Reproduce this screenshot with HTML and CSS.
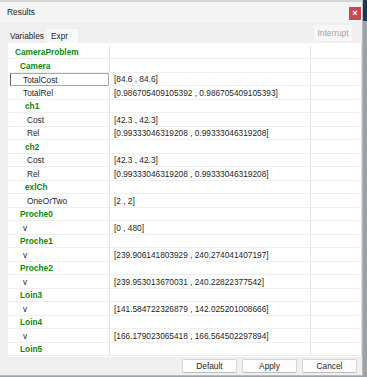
FILE: index.html
```html
<!DOCTYPE html>
<html>
<head>
<meta charset="utf-8">
<link rel="stylesheet" href="styles.css">
</head>
<body>
<div class="window">
  <div class="titlebar">
    <span class="title">Results</span>
    <span class="close">×</span>
  </div>
  <div class="toolrow">
    <div class="tabs">
      <span class="tab">Variables</span>
      <span class="tab active">Expr</span>
    </div>
    <span class="interrupt">Interrupt</span>
  </div>
  <div class="table">
    <div class="row"><div class="c1 grp l0">CameraProblem</div><div class="c2"></div><div class="c3"></div></div>
    <div class="row"><div class="c1 grp l1">Camera</div><div class="c2"></div><div class="c3"></div></div>
    <div class="row"><div class="c1 l2 sel">TotalCost</div><div class="c2">[84.6 , 84.6]</div><div class="c3"></div></div>
    <div class="row"><div class="c1 l2">TotalRel</div><div class="c2">[0.986705409105392 , 0.986705409105393]</div><div class="c3"></div></div>
    <div class="row"><div class="c1 grp l3">ch1</div><div class="c2"></div><div class="c3"></div></div>
    <div class="row"><div class="c1 l4">Cost</div><div class="c2">[42.3 , 42.3]</div><div class="c3"></div></div>
    <div class="row"><div class="c1 l4">Rel</div><div class="c2">[0.99333046319208 , 0.99333046319208]</div><div class="c3"></div></div>
    <div class="row"><div class="c1 grp l3">ch2</div><div class="c2"></div><div class="c3"></div></div>
    <div class="row"><div class="c1 l4">Cost</div><div class="c2">[42.3 , 42.3]</div><div class="c3"></div></div>
    <div class="row"><div class="c1 l4">Rel</div><div class="c2">[0.99333046319208 , 0.99333046319208]</div><div class="c3"></div></div>
    <div class="row"><div class="c1 grp l3">exlCh</div><div class="c2"></div><div class="c3"></div></div>
    <div class="row"><div class="c1 l4">OneOrTwo</div><div class="c2">[2 , 2]</div><div class="c3"></div></div>
    <div class="row"><div class="c1 grp l1">Proche0</div><div class="c2"></div><div class="c3"></div></div>
    <div class="row"><div class="c1 l2">v</div><div class="c2">[0 , 480]</div><div class="c3"></div></div>
    <div class="row"><div class="c1 grp l1">Proche1</div><div class="c2"></div><div class="c3"></div></div>
    <div class="row"><div class="c1 l2">v</div><div class="c2">[239.906141803929 , 240.274041407197]</div><div class="c3"></div></div>
    <div class="row"><div class="c1 grp l1">Proche2</div><div class="c2"></div><div class="c3"></div></div>
    <div class="row"><div class="c1 l2">v</div><div class="c2">[239.953013670031 , 240.22822377542]</div><div class="c3"></div></div>
    <div class="row"><div class="c1 grp l1">Loin3</div><div class="c2"></div><div class="c3"></div></div>
    <div class="row"><div class="c1 l2">v</div><div class="c2">[141.584722326879 , 142.025201008666]</div><div class="c3"></div></div>
    <div class="row"><div class="c1 grp l1">Loin4</div><div class="c2"></div><div class="c3"></div></div>
    <div class="row"><div class="c1 l2">v</div><div class="c2">[166.179023065418 , 166.564502297894]</div><div class="c3"></div></div>
    <div class="row"><div class="c1 grp l1">Loin5</div><div class="c2"></div><div class="c3"></div></div>
  </div>
  <div class="buttons">
    <span class="btn">Default</span>
    <span class="btn">Apply</span>
    <span class="btn">Cancel</span>
  </div>
</div>
</body>
</html>
```
FILE: styles.css
```css
* { box-sizing: border-box; }
html, body { margin: 0; padding: 0; }
body {
  width: 367px;
  height: 377px;
  overflow: hidden;
  background: linear-gradient(#1f3552 0 21px, #9da2a8 21px);
  font-family: "Liberation Sans", Arial, sans-serif;
  font-size: 8.3px;
  color: #1e1e1e;
}
.window {
  width: 363px;
  height: 376px;
  background: #efefef;
  border-top: 2px solid #d4d4d4;
  border-right: 1px solid #b9b9b9;
  border-bottom: 1px solid #b9b9b9;
  display: flex;
  flex-direction: column;
}
.titlebar {
  height: 20px;
  background: #f4f4f4;
  display: flex;
  align-items: center;
  padding-left: 7px;
}
.title { font-size: 8.4px; color: #1a1a1a; }
.close {
  margin-left: auto;
  margin-right: 1px;
  align-self: flex-start;
  margin-top: 5px;
  width: 12px;
  height: 13px;
  background: #c9494c;
  color: #fff;
  font-size: 9px;
  font-weight: bold;
  line-height: 13px;
  text-align: center;
}
.toolrow {
  margin-top: 3px;
  height: 18px;
  display: flex;
  align-items: stretch;
  padding-left: 8px;
  padding-right: 10px;
}
.tabs {
  display: flex;
  align-items: flex-end;
}
.tab {
  height: 14px;
  display: flex;
  align-items: center;
  padding: 0 3px 0 2px;
}
.tab.active {
  background: #f9f9f9;
  padding: 0 10px 0 4px;
}
.interrupt {
  margin-left: auto;
  width: 38px;
  height: 16px;
  background: #f7f7f7;
  color: #a3a3a3;
  display: flex;
  align-items: center;
  justify-content: center;
}
.table {
  margin-left: 8px;
  width: 354px;
  height: 314px;
  background: #fff;
  padding-top: 2.8px;
  border-right: 1px solid #dcdcdc;
}
.row {
  display: grid;
  grid-template-columns: 102px 201px 1fr;
  height: 13.5px;
}
.row > div {
  border-bottom: 1px solid #efefef;
  display: flex;
  align-items: center;
  white-space: nowrap;
  overflow: hidden;
}
.c1, .c2 { border-right: 1px solid #e4e4e4; }
.c2 { padding-left: 4px; }
.grp { color: #0c8a0c; font-weight: bold; }
.l0 { padding-left: 7px; }
.l1 { padding-left: 12px; }
.l2 { padding-left: 15px; }
.l3 { padding-left: 17px; }
.l4 { padding-left: 19px; }
.row > .sel {
  margin: 0 1px 0 2px;
  border: 1px solid #a8a8a8;
  border-left-color: #5e5e5e;
  padding-left: 12px;
}
.buttons {
  margin-top: 2px;
  height: 14px;
  display: flex;
  justify-content: flex-end;
  gap: 5px;
  padding-right: 5px;
}
.btn {
  width: 55px;
  background: #fdfdfd;
  border: 1px solid #d6d6d6;
  border-bottom-color: #bcbcbc;
  border-radius: 2px;
  display: flex;
  align-items: center;
  justify-content: center;
}
```
